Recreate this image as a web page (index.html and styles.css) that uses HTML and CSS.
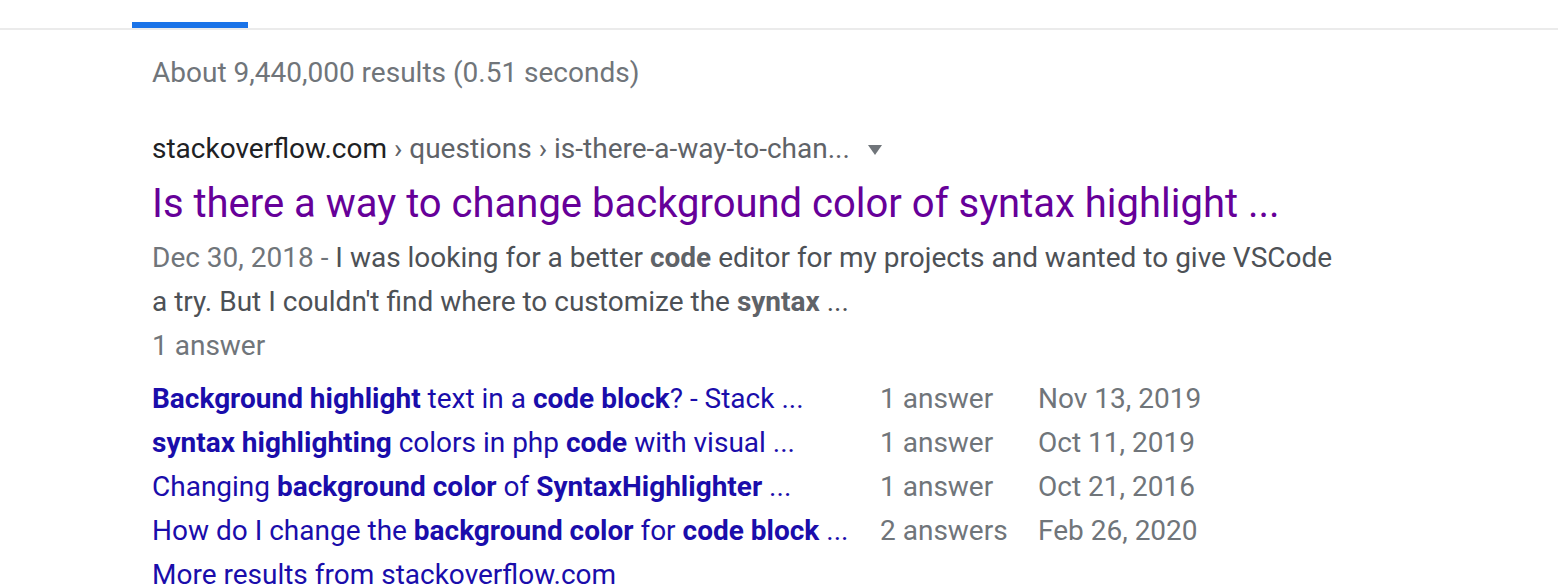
FILE: index.html
```html
<!DOCTYPE html>
<html lang="en">
<head>
<meta charset="utf-8">
<title>Search results</title>
<link rel="stylesheet" href="styles.css">
</head>
<body>
<div class="tabs">
  <div class="tab-indicator"></div>
</div>
<main class="results">
  <div class="stats">About 9,440,000 results (0.51 seconds)</div>
  <div class="result">
    <div class="cite">
      <span class="domain">stackoverflow.com</span><span class="path"> › questions › is-there-a-way-to-chan...</span>
      <span class="caret"></span>
    </div>
    <a class="title" href="#">Is there a way to change background color of syntax highlight ...</a>
    <div class="snippet">
      <span class="date">Dec 30, 2018 - </span>I was looking for a better <b>code</b> editor for my projects and wanted to give VSCode<br>a try. But I couldn't find where to customize the <b>syntax</b> ...
    </div>
    <div class="meta">1 answer</div>
    <div class="sitelinks">
      <a href="#" class="sl-title"><b>Background highlight</b> text in a <b>code block</b>? - Stack ...</a>
      <span class="sl-meta">1 answer</span>
      <span class="sl-meta">Nov 13, 2019</span>
      <a href="#" class="sl-title"><b>syntax highlighting</b> colors in php <b>code</b> with visual ...</a>
      <span class="sl-meta">1 answer</span>
      <span class="sl-meta">Oct 11, 2019</span>
      <a href="#" class="sl-title">Changing <b>background color</b> of <b>SyntaxHighlighter</b> ...</a>
      <span class="sl-meta">1 answer</span>
      <span class="sl-meta">Oct 21, 2016</span>
      <a href="#" class="sl-title">How do I change the <b>background color</b> for <b>code block</b> ...</a>
      <span class="sl-meta">2 answers</span>
      <span class="sl-meta">Feb 26, 2020</span>
    </div>
    <a href="#" class="more">More results from stackoverflow.com</a>
  </div>
</main>
</body>
</html>
```

FILE: styles.css
```css
html, body {
  margin: 0;
  padding: 0;
  background: #fff;
}
body {
  font-family: Roboto, "Liberation Sans", Arial, sans-serif;
  font-size: 28px;
  line-height: 44px;
  color: #4d5156;
  overflow: hidden;
}
a { text-decoration: none; }

.tabs {
  height: 28px;
  border-bottom: 2px solid #ebebeb;
  display: flex;
  align-items: flex-end;
  padding-left: 132px;
}
.tab-indicator {
  width: 116px;
  height: 6px;
  background: #1a73e8;
}

.results {
  padding-left: 152px;
}
.stats {
  margin-top: 21px;
  color: #70757a;
}
.result {
  margin-top: 32px;
}
.cite {
  display: flex;
  align-items: center;
  white-space: pre;
}
.domain { color: #202124; }
.path { color: #5f6368; }
.caret {
  margin-left: 18px;
  width: 0;
  height: 0;
  border-left: 7px solid transparent;
  border-right: 7px solid transparent;
  border-top: 10px solid #70757a;
  margin-top: 2px;
}
.title {
  display: block;
  margin-top: 6px;
  font-size: 40px;
  line-height: 54px;
  color: #660099;
}
.snippet {
  margin-top: 5px;
  color: #4d5156;
}
.snippet b { color: #5f6368; font-weight: 700; }
.date { color: #70757a; }
.meta { color: #70757a; }

.sitelinks {
  margin-top: 9px;
  display: grid;
  grid-template-columns: 728px 158px auto;
}
.sl-title { color: #1a0dab; }
.sl-meta { color: #70757a; }
.more {
  display: block;
  color: #1a0dab;
}
```
